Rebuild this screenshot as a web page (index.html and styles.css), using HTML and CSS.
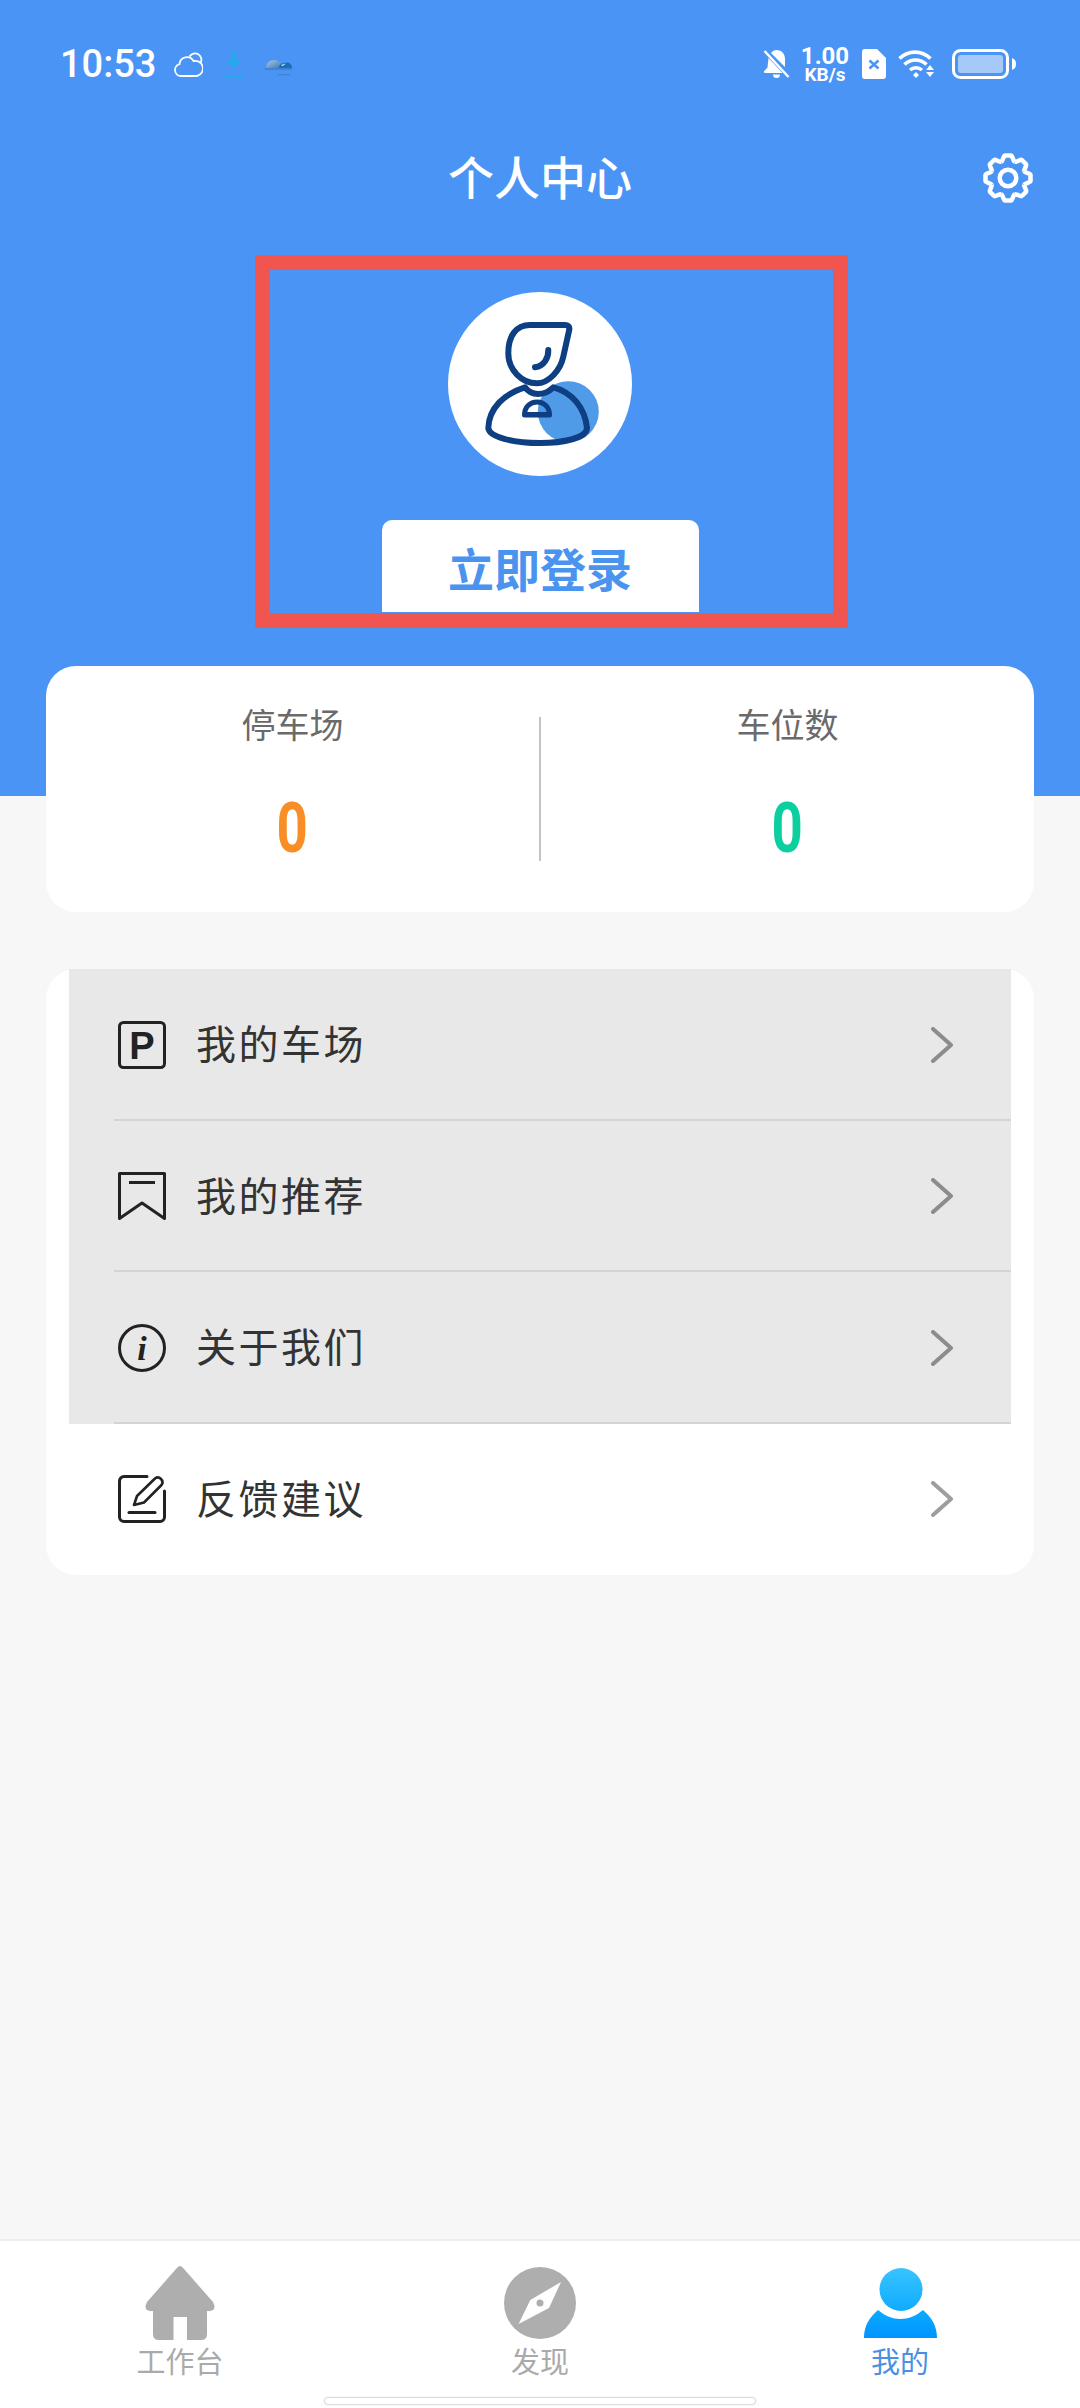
FILE: index.html
```html
<!DOCTYPE html>
<html lang="zh">
<head>
<meta charset="utf-8">
<title>个人中心</title>
<link rel="stylesheet" href="styles.css">
</head>
<body>
<div class="page">
  <header class="header">
    <div class="status">
      <div class="status-left">
        <span class="time">10:53</span>
        <svg class="s-cloud" viewBox="0 0 29 25" fill="none" stroke="#fff" stroke-width="1.800"><path d="M7 24a6 6 0 0 1-1.500-11.800 7.500 7.500 0 0 1 14-3.200 7.500 7.500 0 0 1 3.500 15z"/><path d="M15.500 4.500a5.800 5.800 0 1 1 11 6.500"/></svg>
        <svg class="s-down" viewBox="0 0 20 28"><path d="M8 1h4v9h5l-7 9-7-9h5z" fill="#25a8ec"/><rect y="25" width="20" height="3" fill="#25a8ec"/></svg>
        <svg class="s-weather" viewBox="0 0 27 24"><defs><linearGradient id="sph" x1="0" y1="0" x2="1" y2="1"><stop offset="0" stop-color="#a9c8e6"/><stop offset="1" stop-color="#3f79ad"/></linearGradient></defs><path d="M1 16a8 8 0 0 1 16 0z" fill="url(#sph)"/><path d="M14 16a5 5 0 0 1 6-5 5 5 0 0 1 7 5z" fill="#1d6fb3"/><path d="M16 14a4 4 0 0 1 5-2 5 5 0 0 0-3 2z" fill="#9fd6f5"/><rect y="16" width="27" height="2" fill="#3a78b8" opacity=".6"/><rect x="13" y="22" width="12" height="1.500" fill="#3a78b8" opacity=".5"/></svg>
      </div>
      <div class="status-right">
        <svg class="s-bell" viewBox="0 0 27 30"><path d="M13.500 1c5.500 0 8.500 4 8.500 9v8l-14-14c1.500-2 3.500-3 5.500-3zM5.500 9l14 15H2c-1 0-1.500-1-.8-2l3.300-3.500zM10 25.500h7a3.500 3.500 0 0 1-7 0z" fill="#fff"/><path d="M1.500 2l24 26" stroke="#fff" stroke-width="2.500"/></svg>
        <div class="speed"><span class="speed-num">1.00</span><span class="speed-unit">KB/s</span></div>
        <svg class="s-sim" viewBox="0 0 24 30"><path d="M3 0h12l9 9v18a3 3 0 0 1-3 3H3a3 3 0 0 1-3-3V3a3 3 0 0 1 3-3z" fill="#fff"/><path d="M7.500 11.500l9 8M16.500 11.500l-9 8" stroke="#4a94f5" stroke-width="2.600"/></svg>
        <svg class="s-wifi" viewBox="0 0 37 28" fill="none" stroke="#fff" stroke-width="3.600"><path d="M1.500 8.500c9-8.500 22-8.500 31 0"/><path d="M6.500 14.500c6.500-6 15.500-6 22 0"/><path d="M12 20c3.500-3 8.500-3 12 0"/><path d="M15 25l3-3 3 3-3 3z" fill="#fff" stroke="none"/><path d="M32 15l4 5h-8zM28 22h8l-4 5z" fill="#fff" stroke="none"/></svg>
        <svg class="s-batt" viewBox="0 0 64 30"><rect x="1.500" y="1.500" width="54" height="27" rx="7" fill="none" stroke="#fff" stroke-width="3"/><rect x="6" y="6" width="45" height="18" rx="3" fill="#fff" opacity=".5"/><path d="M60 9c3 1 4 3 4 6s-1 5-4 6z" fill="#fff"/></svg>
      </div>
    </div>
    <div class="titlebar">
      <span></span>
      <h1 class="title">个人中心</h1>
      <svg class="gear" viewBox="-25 -25 50 50" fill="none" stroke="#fff" stroke-width="4.500"><defs><path id="tooth" d="M-6.700-16.200C-4.800-17.500-4.600-22.500-3-22.500H3C4.600-22.500 4.800-17.500 6.700-16.200"/></defs><use href="#tooth"/><use href="#tooth" transform="rotate(45)"/><use href="#tooth" transform="rotate(90)"/><use href="#tooth" transform="rotate(135)"/><use href="#tooth" transform="rotate(180)"/><use href="#tooth" transform="rotate(225)"/><use href="#tooth" transform="rotate(270)"/><use href="#tooth" transform="rotate(315)"/><circle r="8.300"/></svg>
    </div>
    <div class="login-box">
      <div class="avatar">
        <svg viewBox="0 0 184 184" width="184" height="184">
          <circle cx="120.300" cy="119.700" r="30.500" fill="#4f9be8"/>
          <g fill="none" stroke="#0d3f82" stroke-width="6" stroke-linecap="round" stroke-linejoin="round">
            <path d="M82 33H117C120 33 121.800 34.500 121.300 37.500L115.300 64.700C112.500 78 101 91.300 88.700 91.300C74 91.300 60.300 78 60.300 61.300C60.300 44 68 33 82 33Z"/>
            <path d="M100.300 58C100.500 66 96 74 87 75.300"/>
            <path d="M77 95.300C80 99.500 84 102 90 102C96 102 101 99.500 105.300 95.300C124 100 137 116 139 136C139 146 115 151 92 151C65 151 41 145 40.300 136C41 116 56 102 77 95.300Z"/>
            <path d="M76.500 123C76.500 115 82 110 89 110C96 110 101.500 115 101.500 123Z" stroke-width="5"/>
          </g>
          <rect x="76" y="120" width="26" height="3" fill="#0d3f82"/>
        </svg>
      </div>
      <div class="login-btn">立即登录</div>
    </div>
  </header>

  <section class="stats">
    <div class="stat">
      <div class="stat-label">停车场</div>
      <div class="stat-value orange">0</div>
    </div>
    <div class="stat-divider"></div>
    <div class="stat">
      <div class="stat-label">车位数</div>
      <div class="stat-value green">0</div>
    </div>
  </section>

  <section class="menu">
    <div class="row pressed">
      <svg class="row-icon" viewBox="0 0 48 48" fill="none" stroke="#222" stroke-width="3"><rect x="1.500" y="1.500" width="45" height="45" rx="4"/><text class="glyph-p" x="24" y="38" text-anchor="middle">P</text></svg>
      <span class="row-label">我的车场</span>
      <svg class="chev" viewBox="0 0 22 36" fill="none"><path d="M2 2l18 16L2 34"/></svg>
    </div>
    <div class="row pressed">
      <svg class="row-icon" viewBox="0 0 48 48" fill="none" stroke="#222" stroke-width="3" stroke-linejoin="round"><path d="M1.500 1.500H46.500V46.500L24 31 1.500 46.500Z"/><path d="M11 10.500H37"/></svg>
      <span class="row-label">我的推荐</span>
      <svg class="chev" viewBox="0 0 22 36" fill="none"><path d="M2 2l18 16L2 34"/></svg>
    </div>
    <div class="row pressed">
      <svg class="row-icon" viewBox="0 0 48 48" fill="none" stroke="#222" stroke-width="3"><circle cx="24" cy="24" r="22.500"/><text class="glyph-i" x="24" y="36" text-anchor="middle">i</text></svg>
      <span class="row-label">关于我们</span>
      <svg class="chev" viewBox="0 0 22 36" fill="none"><path d="M2 2l18 16L2 34"/></svg>
    </div>
    <div class="row">
      <svg class="row-icon" viewBox="0 0 48 48" fill="none" stroke="#222" stroke-width="3" stroke-linejoin="round" stroke-linecap="round"><path d="M29 1.500H6A4.500 4.500 0 0 0 1.500 6V42A4.500 4.500 0 0 0 6 46.500H42A4.500 4.500 0 0 0 46.500 42V16"/><path d="M11 37.500H37"/><path d="M16 30l3-9L37 3.500c2-1.500 4-1.500 6 .5s2 4 .5 6L26 27.500z" stroke-width="2.600"/></svg>
      <span class="row-label">反馈建议</span>
      <svg class="chev" viewBox="0 0 22 36" fill="none"><path d="M2 2l18 16L2 34"/></svg>
    </div>
  </section>

  <div class="spacer"></div>

  <nav class="tabbar">
    <div class="tabs">
      <div class="tab">
        <svg class="tab-icon" width="72" height="74" viewBox="-1 0 72 74"><path d="M35 0Q37 0 39 3L68 36Q72 44 65 45H62V68Q62 74 56 74H42V51H28.500V74H14Q8 74 8 68V45H5Q-2 44 2 36L31 3Q33 0 35 0Z" fill="#aeaeae"/></svg>
        <span class="tab-label">工作台</span>
      </div>
      <div class="tab">
        <svg class="tab-icon" width="72" height="74" viewBox="0 -1 72 74"><circle cx="36" cy="36" r="36" fill="#aeaeae"/><path d="M57 15L45 41 14.600 57 26.300 33Z" fill="#fff"/><circle cx="36" cy="36" r="3.500" fill="#aeaeae"/></svg>
        <span class="tab-label">发现</span>
      </div>
      <div class="tab active">
        <svg class="tab-icon" width="73" height="74" viewBox="0 -2 73 74"><defs><linearGradient id="hd" x1="0" y1="0" x2="0" y2="1"><stop offset="0" stop-color="#38c4ff"/><stop offset="1" stop-color="#10abff"/></linearGradient><linearGradient id="bd" x1="0" y1="0" x2="0" y2="1"><stop offset="0" stop-color="#0cabff"/><stop offset="1" stop-color="#0094ff"/></linearGradient></defs><ellipse cx="37" cy="21.500" rx="21.500" ry="21.500" fill="url(#hd)"/><path d="M0 70C0 57 6 49 14 42C28 54 45 54 59 42C67 49 73 57 73 70Z" fill="url(#bd)"/></svg>
        <span class="tab-label">我的</span>
      </div>
    </div>
    <div class="home-bar"></div>
  </nav>
</div>
</body>
</html>
```

FILE: styles.css
```css
* { box-sizing: border-box; }
html, body { margin: 0; padding: 0; }
body {
  width: 1080px;
  height: 2408px;
  overflow: hidden;
  font-family: "Noto Sans CJK SC", "Noto Sans", sans-serif;
  background: #f7f7f7;
}
.page { display: flex; flex-direction: column; height: 2408px; }

.header {
  height: 796px;
  background: #4a94f5;
  display: flex;
  flex-direction: column;
  align-items: center;
}
.status {
  width: 100%;
  height: 128px;
  padding: 0 64px 0 60px;
  display: flex;
  align-items: center;
  justify-content: space-between;
}
.status-left, .status-right { display: flex; align-items: center; }
.time {
  font-family: Roboto, sans-serif;
  font-weight: 500;
  font-size: 38px;
  line-height: 44px;
  color: #fff;
  width: 97px;
  margin-right: 17px;
  white-space: nowrap;
}
.s-cloud { width: 29px; height: 25px; margin-right: 21px; }
.s-down { width: 20px; height: 28px; margin-right: 21px; }
.s-weather { width: 27px; height: 24px; }
.s-bell { width: 27px; height: 30px; margin-right: 12px; }
.speed {
  width: 46px;
  margin-right: 14px;
  display: flex;
  flex-direction: column;
  align-items: center;
  color: #fff;
  font-family: Roboto, sans-serif;
  font-weight: 700;
}
.speed-num { font-size: 24px; line-height: 20px; }
.speed-unit { font-size: 19px; line-height: 17px; }
.s-sim { width: 24px; height: 30px; margin-right: 12px; }
.s-wifi { width: 37px; height: 28px; margin-right: 17px; }
.s-batt { width: 64px; height: 30px; }

.titlebar {
  width: 100%;
  height: 99px;
  padding-right: 47px;
  display: grid;
  grid-template-columns: 1fr auto 1fr;
  align-items: center;
}
.title {
  margin: 0 0 5px 47px;
  font-size: 46px;
  font-weight: 500;
  line-height: 60px;
  color: #fff;
}
.gear { width: 50px; height: 50px; justify-self: end; }

.login-box {
  width: 593px;
  height: 373px;
  margin-top: 28px;
  margin-left: 23px;
  border: 15px solid #f0564f;
  padding: 22px 23px 0 0;
  display: flex;
  flex-direction: column;
  align-items: center;
  overflow: hidden;
}
.avatar {
  width: 184px;
  height: 184px;
  flex: none;
  border-radius: 50%;
  background: #fff;
}
.login-btn {
  width: 317px;
  height: 92px;
  flex: none;
  margin-top: 44px;
  background: #fff;
  border-radius: 10px 10px 0 0;
  color: #4a94f0;
  font-size: 46px;
  font-weight: 700;
  line-height: 95px;
  text-align: center;
}

.stats {
  margin: -130px 46px 0;
  height: 246px;
  background: #fff;
  border-radius: 30px;
  padding-top: 33px;
  display: grid;
  grid-template-columns: 1fr 2px 1fr;
  position: relative;
}
.stat { display: flex; flex-direction: column; align-items: center; }
.stat-label {
  font-size: 34px;
  line-height: 50px;
  color: #6a6a6a;
}
.stat-value {
  margin-top: 39px;
  font-family: Roboto, sans-serif;
  font-weight: 700;
  font-size: 70px;
  line-height: 80px;
  transform: scaleX(0.78);
}
.orange { color: #f98e26; }
.green { color: #0ccfa0; }
.stat-divider {
  width: 2px;
  height: 144px;
  margin-top: 18px;
  background: #c4c4c4;
}

.menu {
  margin: 57px 46px 0;
  height: 606px;
  padding: 0 23px;
  background: #fff;
  border-radius: 30px;
  display: flex;
  flex-direction: column;
}
.row {
  flex: 1;
  padding: 0 58px 0 49px;
  display: flex;
  align-items: center;
  position: relative;
}
.pressed { background: #e8e8e8; }
.pressed::after {
  content: "";
  position: absolute;
  left: 45px;
  right: 0;
  bottom: 0;
  height: 2px;
  background: #d4d4d4;
}
.row-icon { width: 48px; height: 48px; flex: none; }
.glyph-p {
  font-family: "Liberation Sans", sans-serif;
  font-weight: 700;
  font-size: 38px;
  fill: #222;
  stroke: none;
}
.glyph-i {
  font-family: "Liberation Serif", serif;
  font-style: italic;
  font-weight: 700;
  font-size: 34px;
  fill: #222;
  stroke: none;
}
.row-label {
  margin: 0 0 5px 30px;
  flex: 1;
  font-size: 40px;
  line-height: 56px;
  letter-spacing: 2.500px;
  color: #333;
}
.chev { width: 22px; height: 36px; flex: none; }
.chev path { stroke: #8c8c8c; stroke-width: 4; stroke-linecap: round; stroke-linejoin: round; }
.row:not(.pressed) .chev path { stroke: #9e9e9e; }

.spacer { flex: 1; }

.tabbar {
  height: 169px;
  padding-top: 27px;
  background: #fff;
  border-top: 2px solid #eeeeee;
  display: flex;
  flex-direction: column;
  align-items: center;
}
.tabs {
  width: 100%;
  margin-top: -2px;
  display: grid;
  grid-template-columns: repeat(3, 1fr);
}
.tab { display: flex; flex-direction: column; align-items: center; }
.tab-icon { display: block; }
.tab-label {
  font-size: 29px;
  line-height: 40px;
  margin-bottom: 4px;
  color: #aaaaaa;
}
.active .tab-label { color: #4a90e2; }
.home-bar {
  width: 432px;
  height: 8px;
  margin-top: 13px;
  background: #fff;
  border: 1px solid #dcdcdc;
  border-radius: 4px;
  box-shadow: 0 0 2px #e4e4e4;
}
```
